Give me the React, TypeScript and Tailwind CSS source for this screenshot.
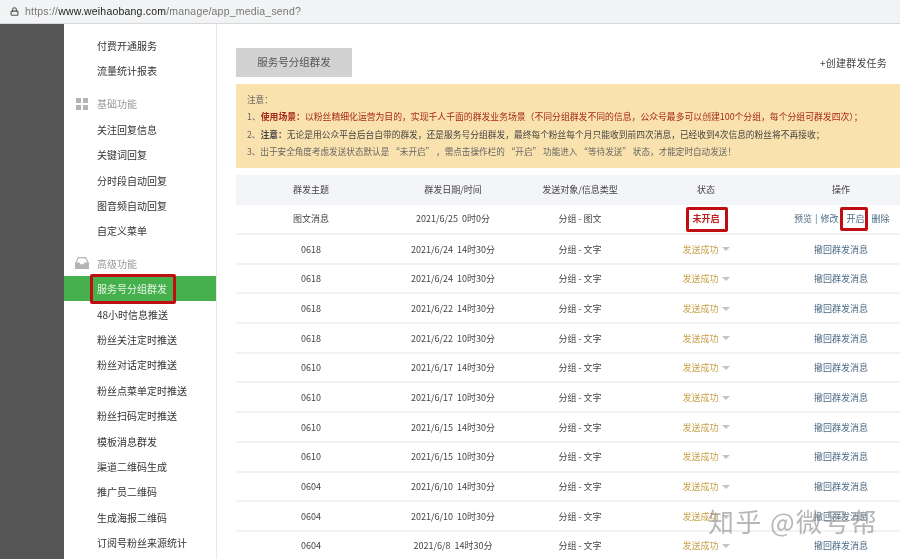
import React from 'react';
import { Lock } from 'lucide-react';

const font = "font-['Noto_Sans_CJK_SC','Liberation_Sans',sans-serif]";

// full width punctuation, written as escapes so it survives copy and paste
const C = '\uFF0C';
const COLON = '\uFF1A';
const SEMI = '\uFF1B';

const line1 = `以粉丝精细化运营为目的${C}实现千人千面的群发业务场景\uFF08不同分组群发不同的信息${C}公众号最多可以创建100个分组${C}每个分组可群发四次\uFF09${SEMI}`;
const line2 = `无论是用公众平台后台自带的群发${C}还是服务号分组群发${C}最终每个粉丝每个月只能收到前四次消息${C}已经收到4次信息的粉丝将不再接收${SEMI}`;
const line3 = `3、出于安全角度考虑发送状态默认是 \u201C未开启\u201D ${C}需点击操作栏的 \u201C开启\u201D 功能进入 \u201C等待发送\u201D 状态${C}才能定时自动发送\uFF01`;

const rows = [
  ['0618', '2021/6/24', '14时30分'],
  ['0618', '2021/6/24', '10时30分'],
  ['0618', '2021/6/22', '14时30分'],
  ['0618', '2021/6/22', '10时30分'],
  ['0610', '2021/6/17', '14时30分'],
  ['0610', '2021/6/17', '10时30分'],
  ['0610', '2021/6/15', '14时30分'],
  ['0610', '2021/6/15', '10时30分'],
  ['0604', '2021/6/10', '14时30分'],
  ['0604', '2021/6/10', '10时30分'],
  ['0604', '2021/6/8', '14时30分'],
];

const MenuItem: React.FC<{ label: string; active?: boolean }> = ({ label, active }) => (
  <div className={`h-[25.4px] pl-[33px] flex items-center text-[10px] ${active ? 'bg-[#46b04c] text-[#e6f5e6]' : 'text-[#333]'}`}>
    {label}
  </div>
);

const Row: React.FC<{ children: React.ReactNode; className?: string }> = ({ children, className = '' }) => (
  <div className={`grid grid-cols-[150px_134px_120px_132px_138px] items-center text-center text-[9px] text-[#444] ${className}`}>
    {children}
  </div>
);

const Sidebar: React.FC = () => (
  <aside className="w-[153px] shrink-0 bg-white border-r border-[#e8e8e8] pt-[8.5px]">
    <MenuItem label="付费开通服务" />
    <MenuItem label="流量统计报表" />
    <div className="h-[25.4px] mt-[8px] pl-[12px] flex items-center text-[10px] text-[#999]">
      <svg width="12" height="12" viewBox="0 0 12 12" className="mr-[9px]" fill="#b4b4b4">
        <rect x="0" y="0" width="5" height="5" />
        <rect x="7" y="0" width="5" height="5" />
        <rect x="0" y="7" width="5" height="5" />
        <rect x="7" y="7" width="5" height="5" />
      </svg>
      基础功能
    </div>
    <MenuItem label="关注回复信息" />
    <MenuItem label="关键词回复" />
    <MenuItem label="分时段自动回复" />
    <MenuItem label="图音频自动回复" />
    <MenuItem label="自定义菜单" />
    <div className="h-[25.4px] mt-[7px] pl-[11px] flex items-center text-[10px] text-[#999]">
      <svg width="14" height="12" viewBox="0 0 14 12" className="mr-[8px]" fill="#b4b4b4">
        <path d="M3 0h8l3 6v6H0V6zM3.8 1.2 1.6 5.6h3l1 1.6h2.8l1-1.6h3l-2.2-4.4z" />
      </svg>
      高级功能
    </div>
    <div className="relative">
      <MenuItem label="服务号分组群发" active />
      <div className="absolute left-[26px] top-[-2px] w-[86px] h-[30px] border-[3px] border-[#c00d12] rounded-[2px]" />
    </div>
    <MenuItem label="48小时信息推送" />
    <MenuItem label="粉丝关注定时推送" />
    <MenuItem label="粉丝对话定时推送" />
    <MenuItem label="粉丝点菜单定时推送" />
    <MenuItem label="粉丝扫码定时推送" />
    <MenuItem label="模板消息群发" />
    <MenuItem label="渠道二维码生成" />
    <MenuItem label="推广员二维码" />
    <MenuItem label="生成海报二维码" />
    <MenuItem label="订阅号粉丝来源统计" />
  </aside>
);

const App: React.FC = () => (
  <div className={`w-[900px] h-[559px] overflow-hidden flex flex-col bg-white relative blur-[0.35px] ${font}`}>
    <div className="h-[24px] shrink-0 bg-[#f1f3f4] border-b border-[#d8d8d8] flex items-center pl-[10px] text-[10px] text-[#777]">
      <Lock size={9} strokeWidth={3} className="text-[#555] mr-[6px]" />
      <span className="font-['Liberation_Sans',sans-serif] text-[10.5px] tracking-[0.2px]">
        https://<span className="text-[#222]">www.weihaobang.com</span>/manage/app_media_send?
      </span>
    </div>

    <div className="flex flex-1 min-h-0">
      <div className="w-[64px] shrink-0 bg-[#555555]" />
      <Sidebar />

      <main className="flex-1 min-w-0 pl-[19px] pt-[24px]">
        <div className="flex items-center justify-between">
          <div className="w-[116px] h-[29px] pb-[1px] bg-[#d2d2d2] flex items-center justify-center text-[10.5px] text-[#555]">
            服务号分组群发
          </div>
          <div className="text-[10px] text-[#444] mr-[13px] tracking-[0.2px]">+创建群发任务</div>
        </div>

        <div className="mt-[7px] h-[84px] bg-[#fae2ae] pl-[11px] pt-[7px] text-[8.6px] leading-[17.4px] text-[#666] whitespace-nowrap overflow-hidden">
          <div>注意{COLON}</div>
          <div className="text-[8.83px] text-[#a5281c]">
            <span className="text-[#666]">1、</span><b>使用场景{COLON}</b>{line1}
          </div>
          <div className="text-[8.74px] text-[#444]">
            <span className="text-[#666]">2、</span><b>注意{COLON}</b>{line2}
          </div>
          <div>{line3}</div>
        </div>

        <div className="mt-[7px] w-[684px]">
          <Row className="h-[30px] bg-[#f4f5f8]">
            <div>群发主题</div>
            <div>群发日期/时间</div>
            <div>发送对象/信息类型</div>
            <div>状态</div>
            <div>操作</div>
          </Row>
          <Row className="h-[30px] border-b-2 border-[#f2f2f2]">
            <div>图文消息</div>
            <div>2021/6/25&nbsp;&nbsp;0时0分</div>
            <div>分组 - 图文</div>
            <div className="relative">
              <span className="font-bold text-[#c02020]">未开启</span>
              <div className="absolute left-[46px] top-[-5px] w-[42px] h-[25px] border-[3px] border-[#c00d12] rounded-[2px]" />
            </div>
            <div className="relative text-[#4c6a85] flex items-center gap-[3px] pl-[22px] whitespace-nowrap">
              <span>预览</span>
              <span>|</span>
              <span>修改</span>
              <span className="ml-[5px]">开启</span>
              <span className="ml-[4px]">删除</span>
              <div className="absolute left-[68px] top-[-5px] w-[28px] h-[24px] border-[3px] border-[#c00d12] rounded-[2px]" />
            </div>
          </Row>
          {rows.map(([topic, date, time], i) => (
            <Row key={i} className="h-[29.7px] pt-[1px] border-b-2 border-[#f2f2f2]">
              <div>{topic}</div>
              <div>{date}&nbsp;&nbsp;{time}</div>
              <div>分组 - 文字</div>
              <div className="flex items-center justify-center gap-[3px] text-[#c9a24a]">
                发送成功
                <span className="w-0 h-0 border-x-[4px] border-x-transparent border-t-[4px] border-t-[#c4c4c4]" />
              </div>
              <div className="text-[#4c6a85]">撤回群发消息</div>
            </Row>
          ))}
        </div>
      </main>
    </div>

    <div className="absolute left-[708px] top-[506px] text-[26px] leading-[30px] tracking-[1.4px] text-[#9a9a9a] opacity-70 whitespace-nowrap">
      知乎 @微号帮
    </div>
  </div>
);

export default App;
